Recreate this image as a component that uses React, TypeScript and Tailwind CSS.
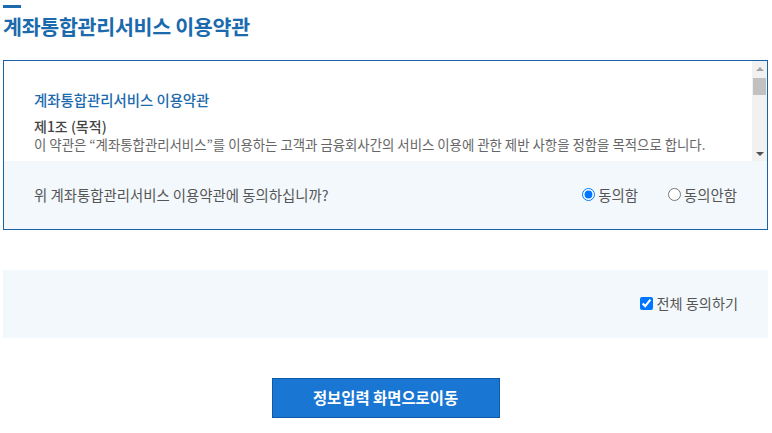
import { useState } from "react";

const font = { fontFamily: '"Noto Sans CJK KR", "Noto Sans", sans-serif' };

// fake classic scrollbar (track, arrows, thumb)
const ScrollBar = () => (
  <div className="w-[15px] shrink-0 bg-[#f1f1f1] flex flex-col items-center">
    <div className="h-[15px] flex items-center justify-center">
      <div className="w-0 h-0 border-l-[4px] border-r-[4px] border-b-[4px] border-l-transparent border-r-transparent border-b-[#a3a3a3]"></div>
    </div>
    <div className="mt-[2px] w-[13px] h-[17px] bg-[#c1c1c1]"></div>
    <div className="flex-1"></div>
    <div className="h-[15px] flex items-center justify-center">
      <div className="w-0 h-0 border-l-[4px] border-r-[4px] border-t-[4px] border-l-transparent border-r-transparent border-t-[#505050]"></div>
    </div>
  </div>
);

const App = () => {
  const [agree, setAgree] = useState("yes");
  const [all, setAll] = useState(true);

  return (
    <div className="min-h-screen bg-white pl-[3px] pr-[4px]" style={font}>
      <div className="pt-[5px]">
        <div className="w-[18px] h-[3px] bg-[#1a6aad]"></div>
        <h1 className="mt-[3px] text-[20.6px] leading-[30px] font-bold text-[#1a6aad] tracking-[-0.3px]">
          계좌통합관리서비스 이용약관
        </h1>
      </div>

      <div className="mt-[19px] border border-[#1a62a6]">
        <div className="h-[100px] flex">
          <div className="flex-1 pl-[30px] pr-[20px] pt-[29px]">
            <h2 className="text-[14.4px] leading-[20px] font-medium text-[#1a6aad]">
              계좌통합관리서비스 이용약관
            </h2>
            <div className="mt-[7px]">
              <div className="text-[14px] leading-[18px] font-medium text-[#444]">제1조 (목적)</div>
              <p className="text-[13.4px] leading-[18px] text-[#666] whitespace-nowrap">
                이 약관은 “계좌통합관리서비스”를 이용하는 고객과 금융회사간의 서비스 이용에 관한 제반 사항을 정함을 목적으로 합니다.
              </p>
            </div>
          </div>
          <ScrollBar />
        </div>
        <div className="h-[68px] bg-[#f2f8fc] flex items-center justify-between pl-[30px] pr-[30px]">
          <span className="text-[14.4px] text-[#555]">위 계좌통합관리서비스 이용약관에 동의하십니까?</span>
          <div className="flex items-center gap-[30px] text-[14.4px] text-[#555]">
            <label className="flex items-center gap-[3px]">
              <input
                type="radio"
                name="agree"
                checked={agree === "yes"}
                onChange={() => setAgree("yes")}
                className="m-0 w-[13px] h-[13px]"
              />
              동의함
            </label>
            <label className="flex items-center gap-[3px]">
              <input
                type="radio"
                name="agree"
                checked={agree === "no"}
                onChange={() => setAgree("no")}
                className="m-0 w-[13px] h-[13px]"
              />
              동의안함
            </label>
          </div>
        </div>
      </div>

      <div className="mt-[40px] h-[68px] bg-[#f2f8fc] flex items-center justify-end pr-[30px]">
        <label className="flex items-center gap-[4px] text-[14.2px] text-[#555]">
          <input
            type="checkbox"
            checked={all}
            onChange={() => setAll(!all)}
            className="m-0 w-[13px] h-[13px]"
          />
          전체 동의하기
        </label>
      </div>

      <div className="mt-[40px] flex justify-center">
        <button className="w-[228px] h-[40px] bg-[#1976d2] border border-[#0d5aa7] text-white text-[15.4px] font-bold">
          정보입력 화면으로이동
        </button>
      </div>
    </div>
  );
};

export default App;
